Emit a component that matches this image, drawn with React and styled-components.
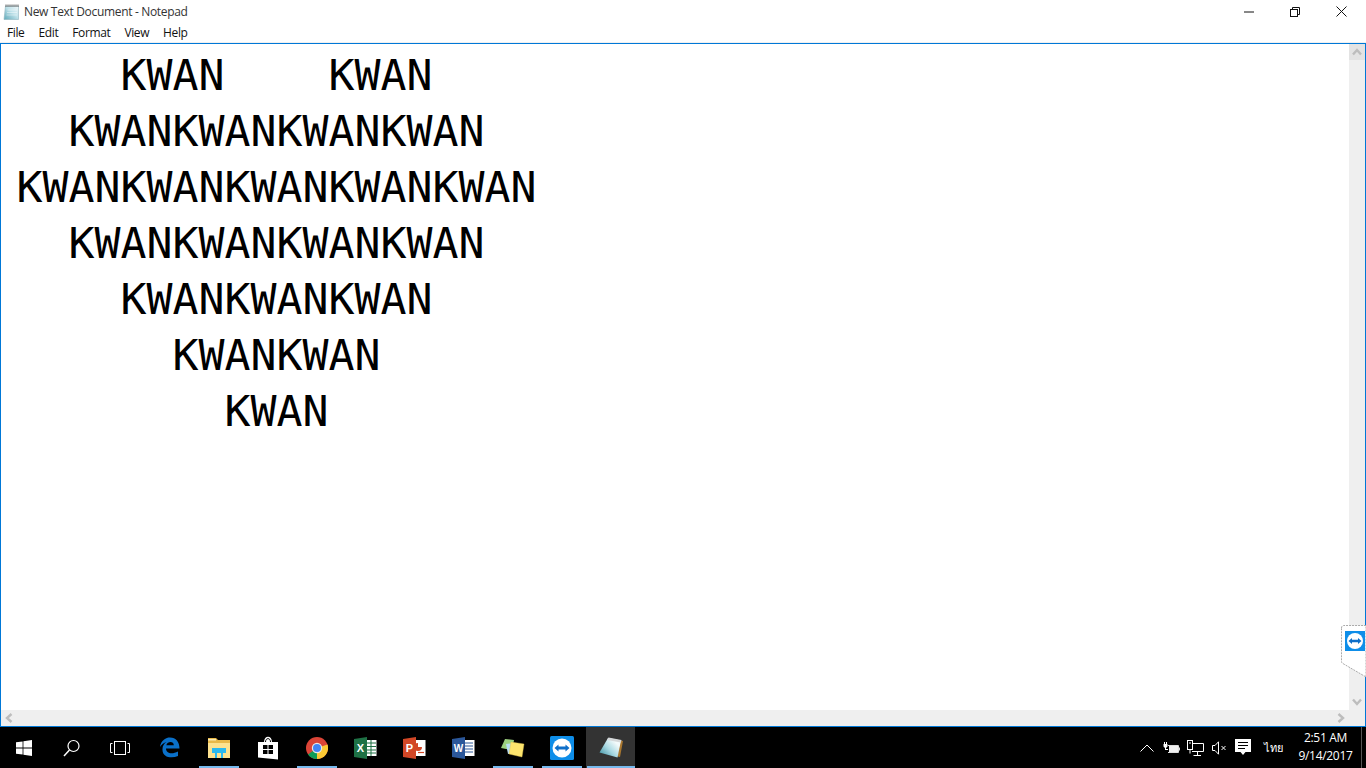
import { createGlobalStyle, styled } from 'styled-components'

const GlobalStyle = createGlobalStyle`
html, body {
  margin: 0;
  padding: 0;
  background: #fff;
  overflow: hidden;
}
`

const uiFont = `"Open Sans", "Noto Sans", "Liberation Sans", sans-serif`

const Screen = styled.div`
width: 1366px;
height: 768px;
display: flex;
flex-direction: column;
position: relative;
overflow: hidden;
font-family: ${uiFont};
`

const TitleBar = styled.div`
height: 23px;
display: flex;
align-items: center;
padding-left: 3px;
gap: 5px;
font-size: 12px;
color: #333;
letter-spacing: -0.33px;
`

const TitleText = styled.span`
flex: 1;
padding-bottom: 1px;
`

const WinButton = styled.div`
width: 46px;
height: 23px;
display: flex;
justify-content: center;
align-items: center;
`

const WinButtons = styled.div`
display: flex;
margin-right: 2px;
`

const MenuBar = styled.div`
height: 19px;
display: flex;
align-items: center;
padding-left: 7px;
gap: 14px;
font-size: 12px;
color: #111;
letter-spacing: -0.38px;
border-bottom: 1px solid #f0f0f0;
`

const Frame = styled.div`
flex: 1;
min-height: 0;
display: grid;
grid-template-columns: 1fr 16px;
grid-template-rows: 1fr 16px;
border: 1px solid #0078d7;
`

const Editor = styled.pre`
margin: 0;
padding: 3px 0 0 15.4px;
overflow: hidden;
font-family: "DejaVu Sans Mono", "Liberation Mono", monospace;
font-size: 43.2px;
line-height: 56px;
color: #000;
`

const VScroll = styled.div`
background: #efefef;
display: flex;
flex-direction: column;
justify-content: space-between;
align-items: center;
`

const HScroll = styled.div`
background: #efefef;
display: flex;
justify-content: space-between;
align-items: center;
`

const Corner = styled.div`
background: #efefef;
`

const ArrowBox = styled.div`
width: 16px;
height: 16px;
display: flex;
justify-content: center;
align-items: center;
background: ${p => (p.$hot ? '#e3e3e3' : 'transparent')};
`

const TaskBar = styled.div`
height: 41px;
background: #000;
display: flex;
align-items: stretch;
`

const ShellButton = styled.div`
width: 48px;
display: flex;
justify-content: center;
align-items: center;
`

const Apps = styled.div`
display: flex;
margin-left: 1px;
`

const AppButton = styled.div`
width: 49px;
display: flex;
justify-content: center;
align-items: center;
position: relative;
background: ${p => (p.$active ? '#333333' : 'transparent')};
&::after {
  content: '';
  display: ${p => (p.$running ? 'block' : 'none')};
  position: absolute;
  bottom: 0;
  left: ${p => (p.$active ? '1px' : '5px')};
  right: ${p => (p.$active ? '0' : '4px')};
  height: 2px;
  background: #76b9ed;
}
`

const Tray = styled.div`
margin-left: auto;
display: flex;
align-items: stretch;
color: #fff;
`

const TrayItem = styled.div`
width: 24px;
display: flex;
justify-content: center;
align-items: center;
`

const Lang = styled.div`
width: 36px;
display: flex;
justify-content: center;
align-items: center;
font-family: "Noto Sans", "Liberation Sans", sans-serif;
font-size: 11px;
`

const Clock = styled.div`
width: 69px;
margin-right: 1px;
display: flex;
flex-direction: column;
justify-content: center;
align-items: center;
font-size: 12px;
line-height: 18px;
letter-spacing: -0.3px;
padding-bottom: 1px;
`

const ShowDesktop = styled.div`
width: 4px;
border-left: 1px solid #555;
`

const TeamTab = styled.div`
position: absolute;
right: 0;
top: 625px;
width: 25px;
height: 54px;
`

const TitleIcon = () => (
  <svg width="16" height="16" viewBox="0 0 16 16">
    <defs>
      <linearGradient id="titlePage" x1="0" y1="1" x2="1" y2="0">
        <stop offset="0" stopColor="#5fa8b8" />
        <stop offset="0.55" stopColor="#bfe2ea" />
        <stop offset="1" stopColor="#f2f8fa" />
      </linearGradient>
    </defs>
    <path d="M2.5 2 H15.5 V15.5 H1 Z" fill="url(#titlePage)" stroke="#8fb3bd" strokeWidth="0.6" />
    <path d="M4.5 6 H14 M4 8.5 H14 M3.5 11 H14" stroke="#fff" strokeWidth="0.6" opacity="0.7" />
    <path d="M3 0.5 V3 M5 0.5 V3 M7 0.5 V3 M9 0.5 V3 M11 0.5 V3 M13 0.5 V3 M15 0.5 V3" stroke="#666" strokeWidth="1" />
  </svg>
)

const NotepadIcon = () => (
  <svg width="24" height="21" viewBox="0 0 24 21">
    <defs>
      <linearGradient id="taskPage" x1="0" y1="1" x2="1" y2="0.1">
        <stop offset="0" stopColor="#2f8799" />
        <stop offset="0.45" stopColor="#a8d8e2" />
        <stop offset="0.8" stopColor="#f3fafb" />
      </linearGradient>
    </defs>
    <path d="M20 3 L24 4 L21 20 L17 19 Z" fill="#a9772f" />
    <path d="M9 1 L22 3.5 L18.5 20.5 L0.5 15.5 Z" fill="url(#taskPage)" />
    <path d="M9.5 0.5 L22.5 3 L21.8 5.5 L8 3 Z" fill="#d5d8da" />
  </svg>
)

const TeamViewerIcon = () => (
  <svg width="24" height="24" viewBox="0 0 24 24">
    <rect width="24" height="24" rx="1.5" fill="#0e8ee9" />
    <circle cx="12" cy="12" r="9.5" fill="#fff" />
    <path d="M4.5 12 L8.5 8.6 V10.6 H15.5 V8.6 L19.5 12 L15.5 15.4 V13.4 H8.5 V15.4 Z" fill="#0e6fc9" />
  </svg>
)

const lines = [
  '    KWAN    KWAN',
  '  KWANKWANKWANKWAN',
  'KWANKWANKWANKWANKWAN',
  '  KWANKWANKWANKWAN',
  '    KWANKWANKWAN',
  '      KWANKWAN',
  '        KWAN',
]

const chev = { fill: 'none', stroke: '#bdbdbd', strokeWidth: 2.4 }

function App() {
  return (
    <Screen>
      <GlobalStyle />
      <TitleBar>
        <TitleIcon />
        <TitleText>New Text Document - Notepad</TitleText>
        <WinButtons>
          <WinButton>
            <svg width="10" height="10" viewBox="0 0 10 10"><path d="M0 5 H10" stroke="#111" strokeWidth="1" /></svg>
          </WinButton>
          <WinButton>
            <svg width="10" height="10" viewBox="0 0 10 10" fill="none" stroke="#111"><path d="M2.5 2.5 V0.5 H9.5 V7.5 H7.5" /><rect x="0.5" y="2.5" width="7" height="7" /></svg>
          </WinButton>
          <WinButton>
            <svg width="11" height="11" viewBox="0 0 11 11"><path d="M0.5 0.5 L10.5 10.5 M10.5 0.5 L0.5 10.5" stroke="#111" strokeWidth="1" /></svg>
          </WinButton>
        </WinButtons>
      </TitleBar>
      <MenuBar>
        <span>File</span>
        <span>Edit</span>
        <span>Format</span>
        <span>View</span>
        <span>Help</span>
      </MenuBar>
      <Frame>
        <Editor>{lines.join('\n')}</Editor>
        <VScroll>
          <ArrowBox $hot>
            <svg width="10" height="8" viewBox="0 0 10 8"><path d="M1 6.5 L5 2 L9 6.5" {...chev} /></svg>
          </ArrowBox>
          <ArrowBox>
            <svg width="10" height="8" viewBox="0 0 10 8"><path d="M1 1.5 L5 6 L9 1.5" {...chev} /></svg>
          </ArrowBox>
        </VScroll>
        <HScroll>
          <ArrowBox>
            <svg width="8" height="10" viewBox="0 0 8 10"><path d="M6.5 1 L2 5 L6.5 9" {...chev} /></svg>
          </ArrowBox>
          <ArrowBox>
            <svg width="8" height="10" viewBox="0 0 8 10"><path d="M1.5 1 L6 5 L1.5 9" {...chev} /></svg>
          </ArrowBox>
        </HScroll>
        <Corner />
      </Frame>
      <TaskBar>
        <ShellButton>
          <svg width="16" height="16" viewBox="0 0 16 16" fill="#fff">
            <path d="M0 2.3 L6.6 1.4 V7.6 H0 Z M7.4 1.3 L16 0 V7.6 H7.4 Z M0 8.4 H6.6 V14.6 L0 13.7 Z M7.4 8.4 H16 V16 L7.4 14.7 Z" />
          </svg>
        </ShellButton>
        <ShellButton>
          <svg width="18" height="18" viewBox="0 0 18 18" fill="none" stroke="#fff" strokeWidth="1.2">
            <circle cx="10.5" cy="7" r="5.5" />
            <path d="M6.5 11 L1 17" strokeWidth="1.5" />
          </svg>
        </ShellButton>
        <ShellButton>
          <svg width="20" height="14" viewBox="0 0 20 14" fill="none" stroke="#fff" strokeWidth="1">
            <rect x="4.5" y="0.5" width="11" height="13" />
            <path d="M2.5 2.5 H0.5 V11.5 H2.5 M17.5 2.5 H19.5 V11.5 H17.5" />
          </svg>
        </ShellButton>
        <Apps>
          <AppButton>
            <svg width="21" height="21" viewBox="0 0 21 21">
              <path d="M1 10 C2 3 7 0.5 11 0.5 C17 0.5 20.5 5 20.5 11.5 H7 C7 16 12.5 18 19 14.5 V19 C12 22 3 20 3.5 12 C3.5 9 5 6.5 7.5 5 C5 5.5 2.5 7.5 1 10 Z M7.3 8.2 H14.8 C14.8 4 8.5 4 7.3 8.2 Z" fill="#0a70c9" fillRule="evenodd" />
            </svg>
          </AppButton>
          <AppButton $running>
            <svg width="22" height="20" viewBox="0 0 22 20">
              <path d="M0 0 H8 L10 2 H22 V20 H0 Z" fill="#e9b949" />
              <rect x="0" y="1" width="8" height="1.5" fill="#fbeab0" />
              <rect x="0" y="5" width="22" height="15" fill="#fde28f" />
              <path fillRule="evenodd" d="M4 10 H18 V15 H15 V20 H7 V15 H4 Z M9 15 V20 H13 V15 Z" fill="#2cb9ef" />
            </svg>
          </AppButton>
          <AppButton>
            <svg width="22" height="24" viewBox="0 0 22 24">
              <path d="M1 6 H7 C7 -1 15 -1 15 6 H21 V23.5 L1 21.5 Z" fill="#fff" />
              <path d="M8.5 6 C8.5 1.5 13.5 1.5 13.5 6" fill="none" stroke="#000" strokeWidth="1" />
              <path d="M6 9 H10.5 V13 H6 Z M11.5 9 H16 V13 H11.5 Z M6 14 H10.5 V18 H6 Z M11.5 14 H16 V18 H11.5 Z" fill="#000" />
            </svg>
          </AppButton>
          <AppButton $running>
            <svg width="22" height="22" viewBox="0 0 22 22">
              <circle cx="11" cy="11" r="11" fill="#db4437" />
              <path d="M11 11 L2 17.5 A11 11 0 0 0 11 22 Z" fill="#0f9d58" />
              <path d="M11 11 L21.5 7.5 A11 11 0 0 1 11 22 Z" fill="#fcc934" />
              <circle cx="11" cy="11" r="5.2" fill="#e8e8e8" />
              <circle cx="11" cy="11" r="4" fill="#4285f4" />
            </svg>
          </AppButton>
          <AppButton>
            <svg width="23" height="22" viewBox="0 0 23 22">
              <rect x="12" y="3" width="10.5" height="16" fill="#fff" />
              <path d="M13 6 H22 M13 9.5 H22 M13 13 H22 M13 16 H22 M17 3 V19" stroke="#1e7145" strokeWidth="1" />
              <path d="M0 2 L13 0 V22 L0 20 Z" fill="#1e7145" />
              <text x="6.3" y="15" fontFamily="Liberation Sans" fontSize="11" fontWeight="700" fill="#fff" textAnchor="middle">X</text>
            </svg>
          </AppButton>
          <AppButton>
            <svg width="23" height="22" viewBox="0 0 23 22">
              <rect x="11" y="3" width="11.5" height="16" fill="#fff" />
              <path d="M15 15.5 H21" stroke="#d24726" strokeWidth="1.2" />
              <path d="M15 6 A4 4 0 1 0 19 10 H15 Z" fill="#d24726" />
              <path d="M0 2 L13 0 V22 L0 20 Z" fill="#d24726" />
              <text x="6.5" y="15" fontFamily="Liberation Sans" fontSize="11" fontWeight="700" fill="#fff" textAnchor="middle">P</text>
            </svg>
          </AppButton>
          <AppButton>
            <svg width="23" height="22" viewBox="0 0 23 22">
              <rect x="12" y="3" width="10.5" height="16" fill="#fff" />
              <path d="M13 6 H21 M13 9 H21 M13 12 H21 M13 15 H21" stroke="#2b579a" strokeWidth="1.1" />
              <path d="M0 2 L13 0 V22 L0 20 Z" fill="#2b579a" />
              <text x="6.5" y="15" fontFamily="Liberation Sans" fontSize="10" fontWeight="700" fill="#fff" textAnchor="middle">W</text>
            </svg>
          </AppButton>
          <AppButton $running>
            <svg width="24" height="20" viewBox="0 0 24 20">
              <path d="M4 1 L13 2 L11 12 L0 10 Z" fill="#9ccf7f" />
              <path d="M5 6 L14 5 L15 15 L7 16 Z" fill="#b8ddf3" />
              <path d="M10 4 L23 6 L21 19 L8 16 Z" fill="#fde46d" stroke="#d8c14e" strokeWidth="0.4" />
            </svg>
          </AppButton>
          <AppButton $running>
            <TeamViewerIcon />
          </AppButton>
          <AppButton $running $active>
            <NotepadIcon />
          </AppButton>
        </Apps>
        <Tray>
          <TrayItem>
            <svg width="14" height="8" viewBox="0 0 14 8" fill="none" stroke="#fff" strokeWidth="1"><path d="M0.5 7.5 L7 1 L13.5 7.5" /></svg>
          </TrayItem>
          <TrayItem>
            <svg width="17" height="12" viewBox="0 0 17 12">
              <path d="M5 3.5 H15.5 V10.5 H5" fill="none" stroke="#ddd" strokeWidth="1" />
              <rect x="6" y="4" width="9" height="6" fill="#f0f0f0" />
              <rect x="16" y="5.5" width="1" height="3" fill="#ddd" />
              <path d="M1.5 0 V2 M3.5 0 V2" stroke="#fff" strokeWidth="1" />
              <path d="M0.5 2 H4.5 V4.5 L3 6 V7 H5 V8 H2 V6 L0.5 4.5 Z" fill="#fff" />
            </svg>
          </TrayItem>
          <TrayItem>
            <svg width="17" height="16" viewBox="0 0 17 16" fill="none" stroke="#fff" strokeWidth="1">
              <path d="M5 3.5 H16.5 V11.5 H5" />
              <rect x="0.5" y="0.5" width="5" height="9" />
              <path d="M3 9.5 V13.5 M10.5 11.5 V15 M6.5 15.5 H14" />
              <path d="M2 3 H4" />
            </svg>
          </TrayItem>
          <TrayItem>
            <svg width="15" height="14" viewBox="0 0 15 14" fill="none" stroke="#fff" strokeWidth="1">
              <path d="M6.5 0.8 V13.2 L3 9.5 H0.5 V4.5 H3 Z" />
              <path d="M9.5 5 L13.5 9 M13.5 5 L9.5 9" />
            </svg>
          </TrayItem>
          <TrayItem>
            <svg width="16" height="17" viewBox="0 0 16 17">
              <path d="M0 0 H16 V13 H10.5 L8 16 L5.5 13 H0 Z" fill="#fff" />
              <path d="M3 3.5 H13 M3 6.5 H13 M3 9.5 H10" stroke="#000" strokeWidth="1" />
            </svg>
          </TrayItem>
          <Lang>ไทย</Lang>
          <Clock>
            <span>2:51 AM</span>
            <span>9/14/2017</span>
          </Clock>
          <ShowDesktop />
        </Tray>
      </TaskBar>
      <TeamTab>
        <svg width="25" height="54" viewBox="0 0 25 54">
          <path d="M0.5 3 Q0.5 0.5 3 0.5 H25 V52 L1 38 Q0.5 37.5 0.5 36 Z" fill="#fff" stroke="#aaa" strokeWidth="1" strokeDasharray="2 1" />
          <rect x="4" y="6" width="20" height="20" fill="#0e8ee9" />
          <circle cx="14" cy="16" r="8" fill="#fff" />
          <path d="M7.5 16 L11 13 V14.8 H17 V13 L20.5 16 L17 19 V17.2 H11 V19 Z" fill="#0e6fc9" />
        </svg>
      </TeamTab>
    </Screen>
  )
}

export default App
